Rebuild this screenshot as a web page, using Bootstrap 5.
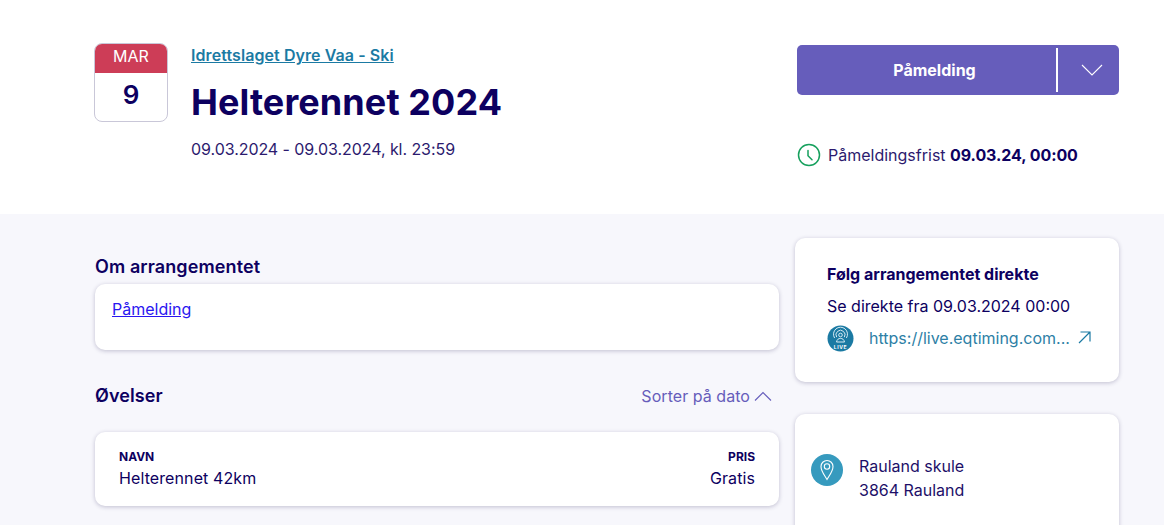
<!DOCTYPE html>
<html lang="no">
<head>
  <meta charset="UTF-8">
  <title>Helterennet 2024</title>
  <link href="https://cdn.jsdelivr.net/npm/bootstrap@5.3.3/dist/css/bootstrap.min.css" rel="stylesheet">
  <style>
    html, body { height: 525px; overflow: hidden; }
    body { font-family: Inter, "Liberation Sans", sans-serif; font-size: 16px; color: #0d0060; background: #f7f7fc; }
    .side-pad { padding-left: 95px; padding-right: 45px; }
    .top-area { background: #fff; height: 214px; padding-top: 43px; }
    .main-col { width: 684px; }
    .side-col { width: 324px; }
    .date-box { width: 74px; height: 79px; margin-left: -1px; margin-right: 23px; border: 1px solid #c9c7d8; border-radius: 8px; overflow: hidden; text-align: center; flex-shrink: 0; }
    .date-month { background: #cd3d57; color: #fff; height: 30px; line-height: 27px; margin: -1px -1px 0; font-size: 16px; }
    .date-day { font-size: 26px; font-weight: 600; line-height: 44px; }
    .org-link { color: #1b7aa3; font-weight: 600; font-size: 16px; line-height: 24px; display: block; letter-spacing: .08px; }
    .event-title { font-size: 36px; font-weight: 700; line-height: 44px; margin: 13px 0 13px; color: #0d0060; letter-spacing: .1px; }
    .event-dates { font-size: 16px; line-height: 24px; color: #2c1a6e; letter-spacing: -.06px; }
    .signup-btn { height: 50px; margin-top: 2px; margin-left: 2px; background: #665dbb; border-radius: 5px; color: #fff; font-weight: 700; }
    .signup-main { flex-grow: 1; text-align: center; line-height: 50px; font-size: 16px; padding-left: 16px; }
    .signup-caret { width: 63px; height: 44px; border-left: 2px solid #fff; padding-left: 6px; }
    .deadline { margin-top: 48px; padding-left: 2px; line-height: 24px; color: #2c1a6e; gap: 7px; }
    .deadline b { color: #0d0060; font-weight: 700; letter-spacing: -.08px; }
    .white-box { background: #fff; border-radius: 10px; box-shadow: 0 1px 4px rgba(30, 25, 80, .25); }
    .section-title { font-size: 18px; font-weight: 600; line-height: 24px; color: #0d0060; margin: 0; letter-spacing: .1px; }
    .about-title { margin-top: 41px; }
    .about-box { height: 66px; padding: 13px 17px; margin-top: 5px; }
    .about-box a { color: #2a16f0; }
    .sort-row { margin-top: 34px; }
    .sort-link { color: #665dbb; padding-right: 7px; line-height: 24px; }
    .sort-link span { letter-spacing: .05px; }
    .race-box { height: 74px; margin-top: 24px; padding: 16px 24px; }
    .race-label { font-size: 12px; font-weight: 700; line-height: 18px; }
    .race-value { line-height: 24px; color: #0d0060; letter-spacing: .1px; }
    .live-box { height: 144px; padding: 24px 27px 0 32px; margin-top: 24px; }
    .live-title { font-size: 16px; font-weight: 700; line-height: 24px; }
    .live-when { line-height: 24px; margin-top: 8px; color: #0d0060; }
    .live-row { margin-top: 7px; }
    .live-link { color: #2d7fa6; line-height: 24px; margin-left: 15px; margin-top: -2px; }
    .live-arrow { margin-top: -2px; }
    .place-box { height: 160px; margin-top: 32px; padding: 40px 16px 0; }
    .place-icon { width: 32px; height: 32px; border-radius: 50%; background: #369abe; flex-shrink: 0; margin-right: 16px; }
    .place-text { line-height: 24px; color: #1d0f68; }
  </style>
</head>
<body>
  <div class="top-area side-pad d-flex gap-3">
    <div class="main-col d-flex">
      <div class="date-box">
        <div class="date-month">MAR</div>
        <div class="date-day">9</div>
      </div>
      <div>
        <a href="#" class="org-link">Idrettslaget Dyre Vaa - Ski</a>
        <h1 class="event-title">Helterennet 2024</h1>
        <div class="event-dates">09.03.2024 - 09.03.2024, kl. 23:59</div>
      </div>
    </div>
    <div class="side-col">
      <div class="signup-btn d-flex align-items-center">
        <div class="signup-main">Påmelding</div>
        <div class="signup-caret d-flex align-items-center justify-content-center">
          <svg width="22" height="12" viewBox="0 0 22 12" fill="none" stroke="#fff" stroke-width="1.1"><path d="M1 1l10 10L21 1"/></svg>
        </div>
      </div>
      <div class="deadline d-flex align-items-center">
        <svg width="24" height="24" viewBox="0 0 24 24" fill="none" stroke="#16a05d" stroke-width="1.5"><circle cx="12" cy="12" r="10.5"/><path d="M11 7.5v5.2l4 4" stroke-linecap="round"/></svg>
        <span>Påmeldingsfrist <b>09.03.24, 00:00</b></span>
      </div>
    </div>
  </div>

  <div class="side-pad d-flex gap-3">
    <div class="main-col">
      <h2 class="section-title about-title">Om arrangementet</h2>
      <div class="white-box about-box"><a href="#">Påmelding</a></div>
      <div class="sort-row d-flex justify-content-between">
        <h2 class="section-title">Øvelser</h2>
        <div class="sort-link d-flex align-items-center gap-1"><span>Sorter på dato</span>
          <svg width="18" height="10" viewBox="0 0 18 10" fill="none" stroke="#665dbb" stroke-width="1.1"><path d="M1 9.500l8-8 8 8"/></svg>
        </div>
      </div>
      <div class="white-box race-box d-flex justify-content-between">
        <div>
          <div class="race-label">NAVN</div>
          <div class="race-value">Helterennet 42km</div>
        </div>
        <div class="text-end">
          <div class="race-label">PRIS</div>
          <div class="race-value">Gratis</div>
        </div>
      </div>
    </div>
    <div class="side-col">
      <div class="white-box live-box">
        <div class="live-title">Følg arrangementet direkte</div>
        <div class="live-when">Se direkte fra 09.03.2024 00:00</div>
        <div class="live-row d-flex align-items-center">
          <svg width="27" height="27" viewBox="0 0 27 27" fill="none">
            <circle cx="13.5" cy="13.5" r="13" fill="#1b7aa3"/>
            <g stroke="#d5e9f2" stroke-width="1">
              <circle cx="13.5" cy="10" r="1.8"/>
              <path d="M9.7 12.2a4.500 4.500 0 1 1 7.600 0M7.600 13a7 7 0 1 1 11.800 0M9.500 17c.5-2.500 2-3.600 4-3.600s3.500 1.100 4 3.600z"/>
            </g>
            <text x="13.5" y="23.5" text-anchor="middle" font-family="Inter, sans-serif" font-size="5" font-weight="700" letter-spacing=".6" fill="#fff">LIVE</text>
          </svg>
          <a href="#" class="live-link text-decoration-none">https://live.eqtiming.com...</a>
          <svg class="live-arrow ms-2" width="13" height="13" viewBox="0 0 13 13" fill="none" stroke="#1b7aa3" stroke-width="1.2"><path d="M1 12L12 1M2.500 1H12v9.500"/></svg>
        </div>
      </div>
      <div class="white-box place-box d-flex">
        <div class="place-icon d-flex align-items-center justify-content-center">
          <svg width="14" height="22" viewBox="0 0 14 22" fill="none" stroke="#fff" stroke-width="1.1"><path d="M7 20.500C4 15.500 1 12 1 7.500a6 6 0 0 1 12 0c0 4.500-3 8-6 13z"/><circle cx="7" cy="7.500" r="2.700"/></svg>
        </div>
        <div class="place-text">Rauland skule<br>3864 Rauland</div>
      </div>
    </div>
  </div>
</body>
</html>
